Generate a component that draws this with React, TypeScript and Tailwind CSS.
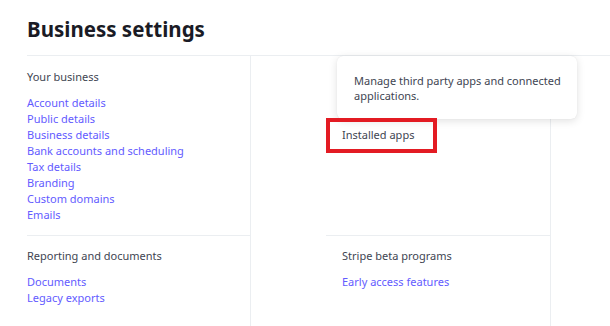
import React from 'react';

const yourBusiness = [
  'Account details',
  'Public details',
  'Business details',
  'Bank accounts and scheduling',
  'Tax details',
  'Branding',
  'Custom domains',
  'Emails',
];

const Section: React.FC<{ title: string; links: string[]; className?: string }> = ({ title, links, className }) => (
  <div className={className}>
    <h3 className="text-[11px] leading-4 text-[#414552]">{title}</h3>
    <ul className="mt-[10px]">
      {links.map((l) => (
        <li key={l} className="text-[11px] leading-4 text-[#635bff]">
          {l}
        </li>
      ))}
    </ul>
  </div>
);

const App: React.FC = () => {
  return (
    <div className="h-[326px] w-[610px] overflow-hidden bg-white pl-[27px] font-['Noto_Sans',sans-serif] antialiased">
      {/* Header */}
      <div className="h-[56px] border-b border-[#ebeef1] pt-[15px]">
        <h1 className="text-[20.5px] font-bold leading-7 text-[#1a1b25]">Business settings</h1>
      </div>

      {/* Columns */}
      <div className="flex h-[270px]">
        <div className="w-[224px] shrink-0 border-r border-[#ebeef1]">
          <Section title="Your business" links={yourBusiness} className="border-b border-[#ebeef1] pt-[13px] pb-[12px]" />
          <Section title="Reporting and documents" links={['Documents', 'Legacy exports']} className="pt-[12px]" />
        </div>

        <div className="relative w-[300px] shrink-0 border-r border-[#ebeef1] pl-[75px]">
          <div className="border-b border-[#ebeef1] px-4 pt-[13px] pb-[12px]">
            {/* items hidden behind the popover */}
            <h3 className="text-[11px] leading-4 text-transparent">Apps</h3>
            <ul className="mt-[10px]">
              <li className="text-[11px] leading-4 text-transparent">App marketplace</li>
              <li className="text-[11px] leading-4 text-transparent">Third party apps</li>
              <li className="text-[11px] leading-4 text-[#414552]">Installed apps</li>
              <li className="text-[11px] leading-4 text-transparent">Extensions</li>
              <li className="text-[11px] leading-4 text-transparent">Webhooks</li>
              <li className="text-[11px] leading-4 text-transparent">API keys</li>
              <li className="text-[11px] leading-4 text-transparent">Logs</li>
              <li className="text-[11px] leading-4 text-transparent">Events</li>
            </ul>
          </div>
          <Section title="Stripe beta programs" links={['Early access features']} className="px-4 pt-[12px]" />

          {/* Popover */}
          <div className="absolute left-[86px] top-0 h-[63px] w-[240px] rounded-md bg-white pl-[17px] pr-[8px] pt-[17px] shadow-[0_2px_8px_rgba(0,0,0,0.12),0_0_1px_rgba(0,0,0,0.1)]">
            <p className="text-[11px] leading-[15px] text-[#414552]">
              Manage third party apps and connected applications.
            </p>
          </div>

          {/* Highlight */}
          <div className="absolute left-[75px] top-[62px] h-[35px] w-[111px] border-4 border-[#e31b23]" />
        </div>

        <div className="flex-1" />
      </div>
    </div>
  );
};

export default App;
